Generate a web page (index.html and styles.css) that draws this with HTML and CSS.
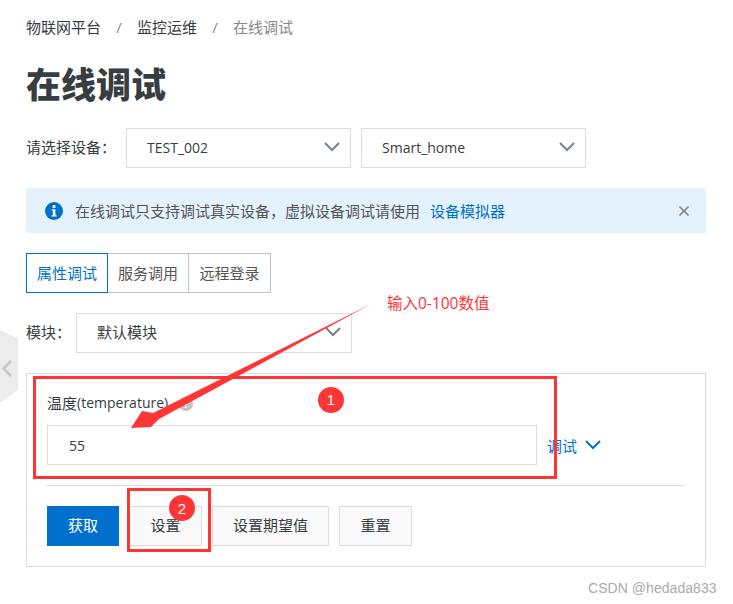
FILE: index.html
```html
<!DOCTYPE html>
<html lang="zh-CN">
<head>
<meta charset="utf-8">
<title>在线调试</title>
<link rel="stylesheet" href="styles.css">
</head>
<body>
<div class="page">
  <nav class="crumbs">
    <span>物联网平台</span><i class="sep">/</i><span>监控运维</span><i class="sep">/</i><span class="current">在线调试</span>
  </nav>
  <h1 class="title">在线调试</h1>
  <div class="device-row">
    <span class="field-label">请选择设备：</span>
    <div class="select"><span class="latin">TEST_002</span><svg class="chev" viewBox="0 0 16 10"><path d="M1 1 8 8 15 1"/></svg></div>
    <div class="select"><span class="latin">Smart_home</span><svg class="chev" viewBox="0 0 16 10"><path d="M1 1 8 8 15 1"/></svg></div>
  </div>
  <div class="alert">
    <svg class="info" viewBox="0 0 18 18"><circle cx="9" cy="9" r="9" fill="#0070cc"/><rect x="7.6" y="3.2" width="2.8" height="2.8" fill="#fff"/><path d="M6.8 7.2h3.6v6h1.2v1.4H6.600v-1.400h1.200V8.600h-1z" fill="#fff"/></svg>
    <span class="alert-text">在线调试只支持调试真实设备，虚拟设备调试请使用</span>
    <a class="alert-link">设备模拟器</a>
    <svg class="close" viewBox="0 0 10 10"><path d="M.5.5 9.500 9.500M9.500.5.5 9.500"/></svg>
  </div>
  <div class="tabs">
    <div class="tab active">属性调试</div>
    <div class="tab">服务调用</div>
    <div class="tab">远程登录</div>
  </div>
  <div class="module-row">
    <span class="module-label">模块：</span>
    <div class="select module"><span>默认模块</span><svg class="chev" viewBox="0 0 16 10"><path d="M1 1 8 8 15 1"/></svg></div>
  </div>
  <section class="card">
    <div class="prop-label">温度<span class="latin">(temperature)</span><span class="help">?</span></div>
    <div class="prop-row">
      <div class="input"><span class="latin">55</span></div>
      <a class="debug">调试<svg class="chev blue" viewBox="0 0 16 10"><path d="M1 1 8 8 15 1"/></svg></a>
    </div>
    <hr class="divider">
    <div class="actions">
      <button class="btn primary">获取</button>
      <button class="btn">设置</button>
      <button class="btn wide">设置期望值</button>
      <button class="btn">重置</button>
    </div>
  </section>
  <div class="watermark">CSDN @hedada833</div>

  <svg class="side-tab" viewBox="0 0 18 76"><path class="side-bg" d="M0 2 18 10V62L0 75Z"/><path class="side-chev" d="M11 33 3.500 40.500 11 48"/></svg>

  <svg class="marks" viewBox="0 0 733 604">
    <rect class="mark-box" x="34.5" y="377.5" width="521" height="100"/>
    <rect class="mark-box" x="128.500" y="489.500" width="81" height="61"/>
    <path class="mark-fill" d="M371 304 153 413 142 411 131 428 151 427 159 419Z"/>
    <circle class="mark-fill" cx="331" cy="400" r="13"/>
    <circle class="mark-fill" cx="182" cy="508" r="13"/>
    <text class="mark-num" x="331" y="405">1</text>
    <text class="mark-num" x="182" y="514">2</text>
  </svg>
  <div class="mark-note">输入0-100数值</div>
</div>
</body>
</html>
```
FILE: styles.css
```css
* { box-sizing: border-box; }
html, body { margin: 0; padding: 0; background: #fff; }
body {
  font-family: "Open Sans", "Noto Sans CJK SC", sans-serif;
  font-size: 15px;
  color: #373d41;
}
.latin { font-size: 14px; }
.page {
  position: relative;
  width: 733px;
  height: 604px;
  overflow: hidden;
  padding: 17px 27px 0 26px;
}
.crumbs { display: flex; align-items: center; height: 21px; line-height: 21px; }
.sep { font-style: normal; color: #888; margin: 0 15px; width: 6px; text-align: center; }
.current { color: #888; }
.title {
  margin: 19px 0 0;
  height: 58px;
  line-height: 56px;
  font-size: 35px;
  font-weight: 900;
}
.device-row { display: flex; align-items: center; gap: 10px; margin-top: 13px; }
.field-label { width: 90px; white-space: nowrap; padding-bottom: 4px; }
.select {
  display: flex;
  align-items: center;
  justify-content: space-between;
  width: 225px;
  height: 40px;
  padding: 0 10px 2px 20px;
  border: 1px solid #dcdcdc;
  background: #fff;
}
.chev { width: 16px; height: 10px; fill: none; stroke: #78828c; stroke-width: 2; }
.chev.blue { stroke: #0070cc; margin-left: 8px; }
.alert {
  display: flex;
  align-items: center;
  height: 45px;
  margin-top: 20px;
  padding: 0 17px 0 19px;
  background: #e3f2fd;
}
.info { width: 18px; height: 18px; flex: none; }
.alert-text { margin-left: 12px; color: #555; padding-bottom: 1px; }
.alert-link { margin-left: 10px; color: #0070cc; padding-bottom: 1px; }
.close { width: 10px; height: 10px; margin-left: auto; fill: none; stroke: #84898e; stroke-width: 1.6; }
.tabs { display: flex; margin-top: 20px; }
.tab {
  display: flex;
  align-items: center;
  justify-content: center;
  width: 82px;
  height: 40px;
  margin-left: -1px;
  padding-bottom: 2px;
  border: 1px solid #c4c4c4;
  color: #555;
}
.tab:first-child { margin-left: 0; }
.tab:last-child { width: 83px; }
.tab.active { position: relative; z-index: 1; border-color: #0070cc; color: #0070cc; }
.module-row { display: flex; align-items: center; margin-top: 20px; }
.module-label { width: 50px; padding-bottom: 4px; }
.select.module { width: 276px; padding-bottom: 4px; }
.select.module .chev { margin-top: 2px; }
.card {
  height: 194px;
  margin-top: 20px;
  padding: 18px 21px 0 20px;
  border: 1px solid #dcdcdc;
}
.prop-label { display: flex; align-items: center; height: 21px; }
.help {
  display: flex;
  align-items: center;
  justify-content: center;
  width: 14px;
  height: 14px;
  margin-left: 11px;
  margin-top: 2px;
  border-radius: 50%;
  background: #c4c4c4;
  color: #fff;
  font-size: 10px;
  font-weight: 700;
}
.prop-row { display: flex; align-items: center; margin-top: 12px; }
.input {
  display: flex;
  align-items: center;
  width: 490px;
  height: 40px;
  padding-left: 21px;
  border: 1px solid #dcdcdc;
}
.debug { display: flex; align-items: center; margin-left: 10px; color: #0070cc; }
.divider { height: 1px; margin: 20px 0 0; border: 0; background: #dcdcdc; }
.actions { display: flex; gap: 10px; margin-top: 20px; }
.btn {
  width: 73px;
  height: 40px;
  padding: 0 0 3px;
  border: 1px solid #dcdcdc;
  background: #f9f9f9;
  color: #373d41;
  font: inherit;
}
.btn.primary { width: 72px; border-color: #0070cc; background: #0070cc; color: #fff; }
.btn.wide { width: 117px; }
.watermark {
  position: absolute;
  left: 588px;
  top: 578px;
  color: #aaa;
  font-family: "Liberation Sans", sans-serif;
  font-size: 14px;
  line-height: 20px;
  letter-spacing: 0.05px;
}
.side-tab { position: absolute; left: 0; top: 328px; width: 18px; height: 76px; }
.side-bg { fill: #ececec; }
.side-chev { fill: none; stroke: #c4c8cc; stroke-width: 2.5; }
.marks { position: absolute; left: 0; top: 0; width: 733px; height: 604px; }
.mark-box { fill: none; stroke: #fc3535; stroke-width: 3; }
.mark-fill { fill: #fc3535; }
.mark-num { fill: #fff; font-family: "Liberation Sans", sans-serif; font-size: 15px; text-anchor: middle; }
.mark-note { position: absolute; left: 387px; top: 292px; color: #fc3535; font-size: 15.5px; line-height: 22px; }
```
